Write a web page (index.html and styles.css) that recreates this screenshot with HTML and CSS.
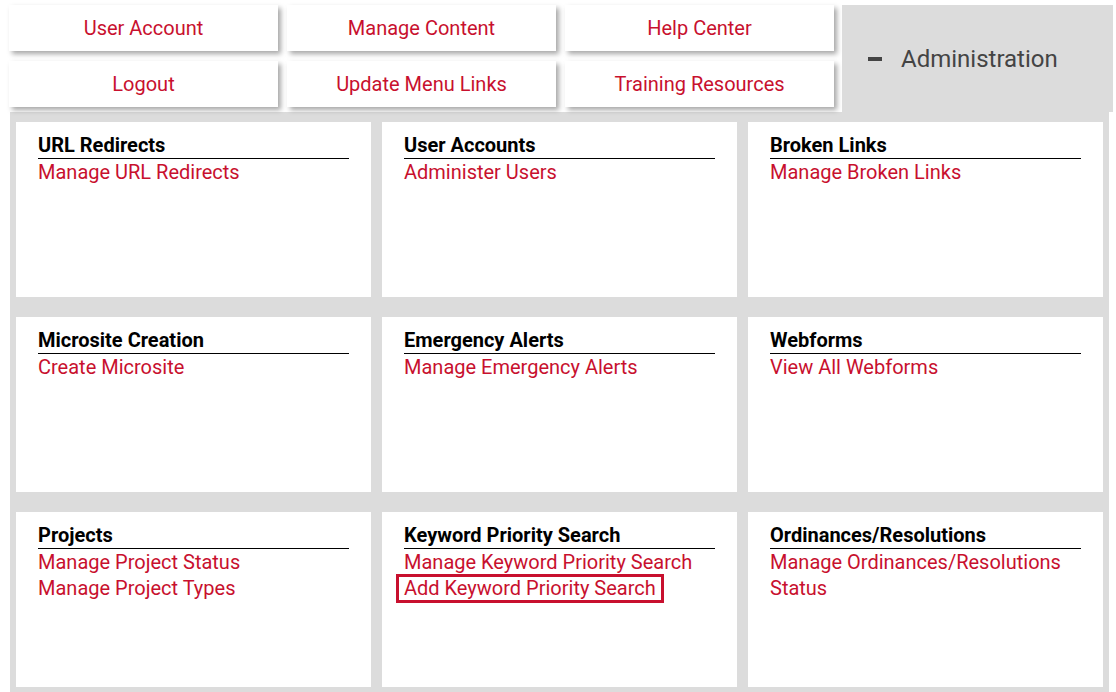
FILE: index.html
```html
<!DOCTYPE html>
<html lang="en">
<head>
<meta charset="utf-8">
<title>Administration</title>
<link rel="stylesheet" href="styles.css">
</head>
<body>
<div class="top">
  <nav class="buttons">
    <a class="btn" href="#">User Account</a>
    <a class="btn" href="#">Manage Content</a>
    <a class="btn" href="#">Help Center</a>
    <a class="btn" href="#">Logout</a>
    <a class="btn" href="#">Update Menu Links</a>
    <a class="btn" href="#">Training Resources</a>
  </nav>
  <div class="tab"><span class="dash"></span><span class="tab-label">Administration</span></div>
</div>
<main class="panel">
  <section class="card">
    <h2 class="card-title">URL Redirects</h2>
    <a class="link" href="#">Manage URL Redirects</a>
  </section>
  <section class="card">
    <h2 class="card-title">User Accounts</h2>
    <a class="link" href="#">Administer Users</a>
  </section>
  <section class="card">
    <h2 class="card-title">Broken Links</h2>
    <a class="link" href="#">Manage Broken Links</a>
  </section>
  <section class="card">
    <h2 class="card-title">Microsite Creation</h2>
    <a class="link" href="#">Create Microsite</a>
  </section>
  <section class="card">
    <h2 class="card-title">Emergency Alerts</h2>
    <a class="link" href="#">Manage Emergency Alerts</a>
  </section>
  <section class="card">
    <h2 class="card-title">Webforms</h2>
    <a class="link" href="#">View All Webforms</a>
  </section>
  <section class="card">
    <h2 class="card-title">Projects</h2>
    <a class="link" href="#">Manage Project Status</a>
    <a class="link" href="#">Manage Project Types</a>
  </section>
  <section class="card">
    <h2 class="card-title">Keyword Priority Search</h2>
    <a class="link" href="#">Manage Keyword Priority Search</a>
    <a class="link link-boxed" href="#">Add Keyword Priority Search</a>
  </section>
  <section class="card">
    <h2 class="card-title">Ordinances/Resolutions</h2>
    <a class="link" href="#">Manage Ordinances/Resolutions Status</a>
  </section>
</main>
</body>
</html>
```
FILE: styles.css
```css
html, body {
  margin: 0;
  padding: 0;
  background: #ffffff;
  font-family: Roboto, "Liberation Sans", Arial, sans-serif;
}

.top {
  display: flex;
  align-items: stretch;
  padding: 5px 0 0 9px;
}

.buttons {
  display: grid;
  grid-template-columns: repeat(3, 269px);
  grid-auto-rows: 46px;
  column-gap: 9px;
  row-gap: 10px;
  padding-bottom: 5px;
}

.btn {
  display: flex;
  align-items: center;
  justify-content: center;
  background: #ffffff;
  color: #c8102e;
  text-decoration: none;
  font-size: 20px;
  box-shadow: 3px 3px 5px rgba(0, 0, 0, 0.35);
}

.tab {
  margin-left: 8px;
  width: 271px;
  background: #dcdcdc;
  display: flex;
  align-items: center;
  padding-left: 26px;
  box-sizing: border-box;
  color: #444444;
}

.dash {
  display: block;
  width: 14px;
  height: 4px;
  background: #444444;
  margin-right: 19px;
  margin-top: 1px;
}

.tab-label {
  font-size: 24px;
  line-height: 28px;
}

.panel {
  margin: 0 7px 0 10px;
  background: #dcdcdc;
  padding: 10px 6px 5px 6px;
  display: grid;
  grid-template-columns: repeat(3, 355px);
  grid-auto-rows: 175px;
  column-gap: 11px;
  row-gap: 20px;
}

.card {
  background: #ffffff;
  padding: 12px 22px 0 22px;
  display: flex;
  flex-direction: column;
  align-items: flex-start;
}

.card-title {
  align-self: stretch;
  margin: 0;
  font-size: 20px;
  line-height: 22px;
  font-weight: 700;
  color: #000000;
  padding-bottom: 2px;
  border-bottom: 1px solid #000000;
}

.link {
  display: block;
  color: #c8102e;
  text-decoration: none;
  font-size: 20px;
  line-height: 26px;
}

.link-boxed {
  line-height: 23px;
  border: 3px solid #c8102e;
  padding: 0 5px;
  margin: -1px 0 0 -8px;
}
```
